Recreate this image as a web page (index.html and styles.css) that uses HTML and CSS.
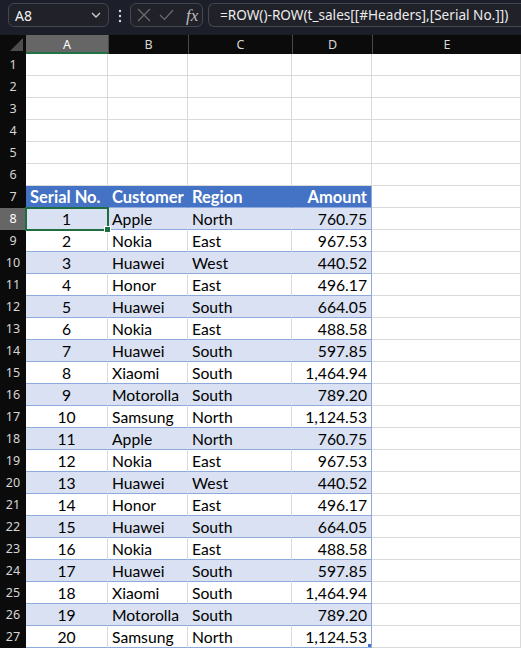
FILE: index.html
```html
<!DOCTYPE html>
<html lang="en">
<head>
<meta charset="UTF-8">
<meta name="viewport" content="width=device-width, initial-scale=1.0">
<link rel="stylesheet" href="styles.css">
<title>t_sales</title>
</head>
<body>

<div class="topbar">
  <div class="namebox">
    <span>A8</span>
    <svg class="chev" width="10" height="6" viewBox="0 0 10 6"><path d="M1 1l4 4 4-4" fill="none" stroke="#d0d0d0" stroke-width="1.3"/></svg>
  </div>
  <svg class="vdots" width="4" height="14" viewBox="0 0 4 14"><circle cx="2" cy="2" r="1.2" fill="#d8d8d8"/><circle cx="2" cy="7" r="1.2" fill="#d8d8d8"/><circle cx="2" cy="12" r="1.2" fill="#d8d8d8"/></svg>
  <div class="fnbox">
    <svg width="14" height="14" viewBox="0 0 14 14"><path d="M1 1l12 12M13 1L1 13" stroke="#6e6e6e" stroke-width="1.2" fill="none"/></svg>
    <svg width="15" height="12" viewBox="0 0 15 12"><path d="M1 6l4.5 4.5L14 1" stroke="#6e6e6e" stroke-width="1.2" fill="none"/></svg>
    <span class="fx">fx</span>
  </div>
  <div class="formula">=ROW()-ROW(t_sales[[#Headers],[Serial No.]])</div>
</div>

<div class="sheet">
  <!-- column headers -->
  <div class="corner"><svg width="13" height="13" viewBox="0 0 13 13"><path d="M13 0V13H0z" fill="#4d4d4d"/></svg></div>
  <div class="ch sel">A</div><div class="ch">B</div><div class="ch">C</div><div class="ch">D</div><div class="ch">E</div>

  <div class="rh">1</div><div class="c"></div><div class="c"></div><div class="c"></div><div class="c"></div><div class="c"></div>
  <div class="rh">2</div><div class="c"></div><div class="c"></div><div class="c"></div><div class="c"></div><div class="c"></div>
  <div class="rh">3</div><div class="c"></div><div class="c"></div><div class="c"></div><div class="c"></div><div class="c"></div>
  <div class="rh">4</div><div class="c"></div><div class="c"></div><div class="c"></div><div class="c"></div><div class="c"></div>
  <div class="rh">5</div><div class="c"></div><div class="c"></div><div class="c"></div><div class="c"></div><div class="c"></div>
  <div class="rh">6</div><div class="c"></div><div class="c"></div><div class="c"></div><div class="c"></div><div class="c"></div>

  <!-- table t_sales -->
  <div class="rh">7</div><div class="c th">Serial No.</div><div class="c th">Customer</div><div class="c th">Region</div><div class="c th num last">Amount</div><div class="c"></div>
  <div class="rh sel">8</div><div class="c band ctr active">1</div><div class="c band">Apple</div><div class="c band">North</div><div class="c band num last">760.75</div><div class="c"></div>
  <div class="rh">9</div><div class="c row ctr">2</div><div class="c row">Nokia</div><div class="c row">East</div><div class="c row num last">967.53</div><div class="c"></div>
  <div class="rh">10</div><div class="c band ctr">3</div><div class="c band">Huawei</div><div class="c band">West</div><div class="c band num last">440.52</div><div class="c"></div>
  <div class="rh">11</div><div class="c row ctr">4</div><div class="c row">Honor</div><div class="c row">East</div><div class="c row num last">496.17</div><div class="c"></div>
  <div class="rh">12</div><div class="c band ctr">5</div><div class="c band">Huawei</div><div class="c band">South</div><div class="c band num last">664.05</div><div class="c"></div>
  <div class="rh">13</div><div class="c row ctr">6</div><div class="c row">Nokia</div><div class="c row">East</div><div class="c row num last">488.58</div><div class="c"></div>
  <div class="rh">14</div><div class="c band ctr">7</div><div class="c band">Huawei</div><div class="c band">South</div><div class="c band num last">597.85</div><div class="c"></div>
  <div class="rh">15</div><div class="c row ctr">8</div><div class="c row">Xiaomi</div><div class="c row">South</div><div class="c row num last">1,464.94</div><div class="c"></div>
  <div class="rh">16</div><div class="c band ctr">9</div><div class="c band">Motorolla</div><div class="c band">South</div><div class="c band num last">789.20</div><div class="c"></div>
  <div class="rh">17</div><div class="c row ctr">10</div><div class="c row">Samsung</div><div class="c row">North</div><div class="c row num last">1,124.53</div><div class="c"></div>
  <div class="rh">18</div><div class="c band ctr">11</div><div class="c band">Apple</div><div class="c band">North</div><div class="c band num last">760.75</div><div class="c"></div>
  <div class="rh">19</div><div class="c row ctr">12</div><div class="c row">Nokia</div><div class="c row">East</div><div class="c row num last">967.53</div><div class="c"></div>
  <div class="rh">20</div><div class="c band ctr">13</div><div class="c band">Huawei</div><div class="c band">West</div><div class="c band num last">440.52</div><div class="c"></div>
  <div class="rh">21</div><div class="c row ctr">14</div><div class="c row">Honor</div><div class="c row">East</div><div class="c row num last">496.17</div><div class="c"></div>
  <div class="rh">22</div><div class="c band ctr">15</div><div class="c band">Huawei</div><div class="c band">South</div><div class="c band num last">664.05</div><div class="c"></div>
  <div class="rh">23</div><div class="c row ctr">16</div><div class="c row">Nokia</div><div class="c row">East</div><div class="c row num last">488.58</div><div class="c"></div>
  <div class="rh">24</div><div class="c band ctr">17</div><div class="c band">Huawei</div><div class="c band">South</div><div class="c band num last">597.85</div><div class="c"></div>
  <div class="rh">25</div><div class="c row ctr">18</div><div class="c row">Xiaomi</div><div class="c row">South</div><div class="c row num last">1,464.94</div><div class="c"></div>
  <div class="rh">26</div><div class="c band ctr">19</div><div class="c band">Motorolla</div><div class="c band">South</div><div class="c band num last">789.20</div><div class="c"></div>
  <div class="rh">27</div><div class="c row ctr">20</div><div class="c row">Samsung</div><div class="c row">North</div><div class="c row num last end">1,124.53</div><div class="c"></div>
</div>

</body>
</html>
```

FILE: styles.css
```css
body { margin: 0; background: #fff; width: 521px; height: 648px; overflow: hidden; font-family: "Noto Sans", sans-serif; }

/* formula bar */
.topbar { height: 35px; background: #1c1e29; display: flex; align-items: flex-start; padding-top: 3px; box-sizing: border-box; }
.namebox { margin-left: 8px; width: 101px; height: 24px; box-sizing: border-box; border: 1px solid #45474f; border-radius: 6px; background: #202129; display: flex; align-items: center; justify-content: space-between; padding: 0 7px 0 6px; color: #f2f2f2; font-size: 14px; }
.vdots { margin: 6px 8px 0 9px; }
.fnbox { width: 73px; height: 24px; box-sizing: border-box; border: 1px solid #45474f; border-radius: 6px; background: #202129; display: flex; align-items: center; gap: 8px; padding-left: 6px; }
.fx { font-family: "Liberation Serif", serif; font-style: italic; font-size: 17px; color: #bdbdbd; margin-left: 4px; line-height: 1; }
.formula { margin-left: 5px; flex: 1; height: 24px; box-sizing: border-box; border: 1px solid #45474f; border-right: none; border-radius: 6px 0 0 6px; background: #202129; color: #ececec; font-size: 13.6px; line-height: 22px; padding-left: 11px; white-space: nowrap; overflow: hidden; }

/* grid */
.sheet { display: grid; grid-template-columns: 26px 82px 80px 104px 80px 1fr; grid-template-rows: 19px; grid-auto-rows: 22px; font-family: Lato, sans-serif; font-size: 15.7px; color: #000; }
.corner { background: #0b0b0b; display: flex; align-items: flex-end; justify-content: flex-end; padding: 0 3px 3px 0; }
.ch { background: #0b0b0b; color: #d6d6d6; font-family: "Noto Sans", sans-serif; font-size: 12.5px; text-align: center; line-height: 19px; border-left: 1px solid #4a4a4a; }
.ch.sel { background: #666; color: #fff; border-left: none; box-shadow: inset 0 -2px 0 #217346; }
.rh { background: #0b0b0b; color: #d6d6d6; font-family: "Noto Sans", sans-serif; font-size: 12.5px; text-align: center; line-height: 22px; }
.rh.sel { background: #666; color: #fff; }

.c { box-sizing: border-box; border-right: 1px solid #dadada; border-bottom: 1px solid #dadada; line-height: 22px; padding: 0 4px; white-space: nowrap; }
.th { background: #4472c4; color: #fff; font-weight: bold; font-size: 16.5px; border-right-color: #4472c4; border-bottom-color: #8ea9db; }
.band { background: #d9e1f2; border-right-color: #d9e1f2; border-bottom-color: #8ea9db; }
.row { border-bottom-color: #8ea9db; }
.num { text-align: right; }
.ctr { text-align: center; }
.last { border-right-color: #8ea9db; }

.active { position: relative; outline: 2px solid #1e6e42; outline-offset: -1px; }
.active::after { content: ""; position: absolute; right: -4px; bottom: -4px; width: 5px; height: 5px; background: #1e6e42; border: 1px solid #fff; }
.end { position: relative; }
.end::after { content: ""; position: absolute; right: 0; bottom: 0; width: 3px; height: 3px; background: #4472c4; }
```
